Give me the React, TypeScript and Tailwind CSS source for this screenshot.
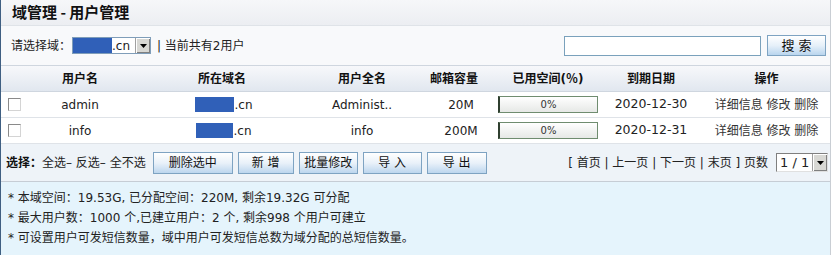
import React from "react";

interface UserRow {
    name: string;
    domainW: number;
    fullName: string;
    quota: string;
    used: string;
    expire: string;
}

const users: UserRow[] = [
    { name: "admin", domainW: 39, fullName: "Administ..", quota: "20M", used: "0%", expire: "2020-12-30" },
    { name: "info", domainW: 37, fullName: "info", quota: "200M", used: "0%", expire: "2020-12-31" },
];

const cols = "grid grid-cols-[28px_102px_182px_98px_86px_102px_104px_127px]";

const Btn = ({ label, w }: { label: string; w: string }) => (
    <button className={`${w} h-[22px] border border-[#7ea3c2] bg-gradient-to-b from-[#ffffff] via-[#e9f1f9] to-[#bcd6ee] text-[12px] text-[#111] leading-none`}>
        {label}
    </button>
);

const Arrow = () => (
    <span className="w-[15px] h-full flex items-center justify-center bg-[#d8d8d4] border-l border-[#a0a0a0] shadow-[inset_1px_1px_0_#fff,inset_-1px_-1px_0_#808080]">
        <svg width="7" height="4" viewBox="0 0 7 4"><path d="M0 0h7L3.5 4z" fill="#000" /></svg>
    </span>
);

export default function App() {
    return (
        <div className="w-[831px] h-[255px] overflow-hidden bg-white border-l border-[#3f5f82] border-r border-r-[#c9ced4] font-['DejaVu_Sans','Noto_Sans_CJK_SC',sans-serif] text-[12px] text-[#222]">
            {/* title */}
            <div className="h-[26px] pl-[11px] flex items-center bg-gradient-to-b from-[#f6f7f9] to-[#eceef2] border-b border-[#dfe3e8] font-bold text-[15px] text-[#111] font-['Noto_Sans_CJK_SC',sans-serif]">
                域管理 - 用户管理
            </div>

            {/* domain + search */}
            <div className="h-[39px] flex items-center justify-between pl-[10px] pr-[4px] bg-[#f8f9fb]">
                <div className="flex items-center">
                    <span className="w-[61px] whitespace-nowrap">请选择域：</span>
                    <div className="w-[79px] h-[17px] flex items-center border border-[#7f9db9] bg-white">
                        <span className="w-[39px] shrink-0 h-[15px] bg-[#3060b8]" />
                        <span className="flex-1 text-[12px] leading-none">.cn</span>
                        <Arrow />
                    </div>
                    <span className="ml-[6px]">| 当前共有2用户</span>
                </div>
                <div className="flex items-center gap-[6px]">
                    <input className="w-[197px] h-[20px] border border-[#7aa1bc] bg-white outline-none" />
                    <button className="w-[59px] h-[21px] border border-[#7ea3c2] bg-gradient-to-b from-[#ffffff] via-[#e6f0f9] to-[#b9d5ee] text-[13px] text-[#111]">
                        搜 索
                    </button>
                </div>
            </div>

            {/* table header */}
            <div className={`${cols} h-[27px] items-center border-t border-b border-[#cfd6df] bg-gradient-to-b from-[#f7f8fb] to-[#e1e7ef] font-bold text-[#111] text-center`}>
                <span />
                <span>用户名</span>
                <span>所在域名</span>
                <span>用户全名</span>
                <span>邮箱容量</span>
                <span>已用空间(％)</span>
                <span>到期日期</span>
                <span>操作</span>
            </div>

            {users.map((u) => (
                <div key={u.name} className={`${cols} h-[26px] items-center border-b border-[#dfe3e8] text-center`}>
                    <span className="flex pl-[7px]">
                        <span className="w-[13px] h-[13px] border border-[#8a8a8a] border-r-[#d4d4d4] border-b-[#d4d4d4] bg-white" />
                    </span>
                    <span>{u.name}</span>
                    <span className="flex items-center justify-center pl-[4px]">
                        <span className="h-[15px] bg-[#3060b8]" style={{ width: u.domainW }} />
                        <span>.cn</span>
                    </span>
                    <span>{u.fullName}</span>
                    <span className="pl-[14px]">{u.quota}</span>
                    <span className="flex justify-center">
                        <span className="w-[100px] h-[17px] flex items-center justify-center border border-[#6f8c6f] border-l-2 border-l-[#2f3f2f] bg-gradient-to-b from-[#ffffff] to-[#e6e8e6] text-[10px] text-[#333]">
                            {u.used}
                        </span>
                    </span>
                    <span className="text-[12.5px]">{u.expire}</span>
                    <span className="text-[#333]">详细信息 修改 删除</span>
                </div>
            ))}

            {/* toolbar */}
            <div className="h-[38px] flex items-center justify-between pl-[5px] pr-[2px] bg-[#eef3f8] border-b border-[#c6cdd5]">
                <div className="flex items-center gap-[5px]">
                    <span className="mr-[2px] whitespace-nowrap"><b className="text-[#111]">选择：</b>全选– 反选– 全不选</span>
                    <Btn label="删除选中" w="w-[80px]" />
                    <Btn label="新 增" w="w-[56px]" />
                    <Btn label="批量修改" w="w-[59px]" />
                    <Btn label="导 入" w="w-[59px]" />
                    <Btn label="导 出" w="w-[60px]" />
                </div>
                <div className="flex items-center">
                    <span className="mr-[8px]">[ 首页 | 上一页 | 下一页 | 末页 ] 页数</span>
                    <div className="w-[52px] h-[19px] flex items-center border border-[#7f7f7f] border-r-[#e0e0e0] border-b-[#e0e0e0] bg-white">
                        <span className="flex-1 pl-[3px] text-[13px] leading-none">1 / 1</span>
                        <Arrow />
                    </div>
                </div>
            </div>

            {/* info */}
            <div className="h-[80px] bg-[#e5f4fc] pt-[6px] pl-[7px] leading-[20px] text-[#222]">
                <div>* 本域空间：19.53G, 已分配空间：220M, 剩余19.32G 可分配</div>
                <div>* 最大用户数：1000 个,已建立用户：2 个, 剩余998 个用户可建立</div>
                <div>* 可设置用户可发短信数量，域中用户可发短信总数为域分配的总短信数量。</div>
            </div>
        </div>
    );
}
